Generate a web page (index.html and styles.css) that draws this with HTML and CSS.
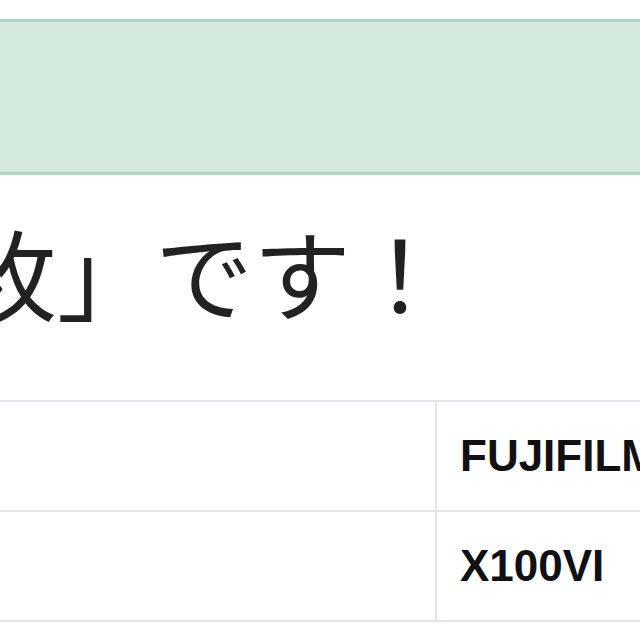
FILE: index.html
```html
<!DOCTYPE html>
<html lang="ja">
<head>
<meta charset="utf-8">
<title>X100VI</title>
<link rel="stylesheet" href="styles.css">
</head>
<body>
<div class="notice"></div>
<p class="lead">枚」です！</p>
<div class="spec-wrap">
<table class="spec">
<colgroup><col class="c-label"><col class="c-value"></colgroup>
<tbody>
<tr><td></td><td>FUJIFILM</td></tr>
<tr><td></td><td>X100VI</td></tr>
</tbody>
</table>
</div>
</body>
</html>
```
FILE: styles.css
```css
html, body {
  margin: 0;
  padding: 0;
  overflow: hidden;
  background: #ffffff;
}
.notice {
  margin-top: 19px;
  height: 150px;
  background: #d2e9dc;
  border-top: 3px solid #aad4c4;
  border-bottom: 3px solid #aad4c4;
}
.lead {
  margin: 46px 0 0 -41px;
  font-family: "Noto Sans CJK JP", sans-serif;
  font-size: 98px;
  line-height: 98px;
  font-weight: 400;
  color: #222222;
  white-space: nowrap;
}
.spec-wrap {
  margin-top: 81px;
  margin-left: -60px;
}
.spec {
  border-collapse: collapse;
  table-layout: fixed;
  width: 900px;
}
.c-label { width: 495px; }
.spec td {
  border: 2px solid #e4e4ea;
  height: 108px;
  padding: 0 23px;
  font-family: "Liberation Sans", Arial, sans-serif;
  font-weight: 700;
  font-size: 44px;
  color: #111111;
  vertical-align: middle;
  white-space: nowrap;
}
```
